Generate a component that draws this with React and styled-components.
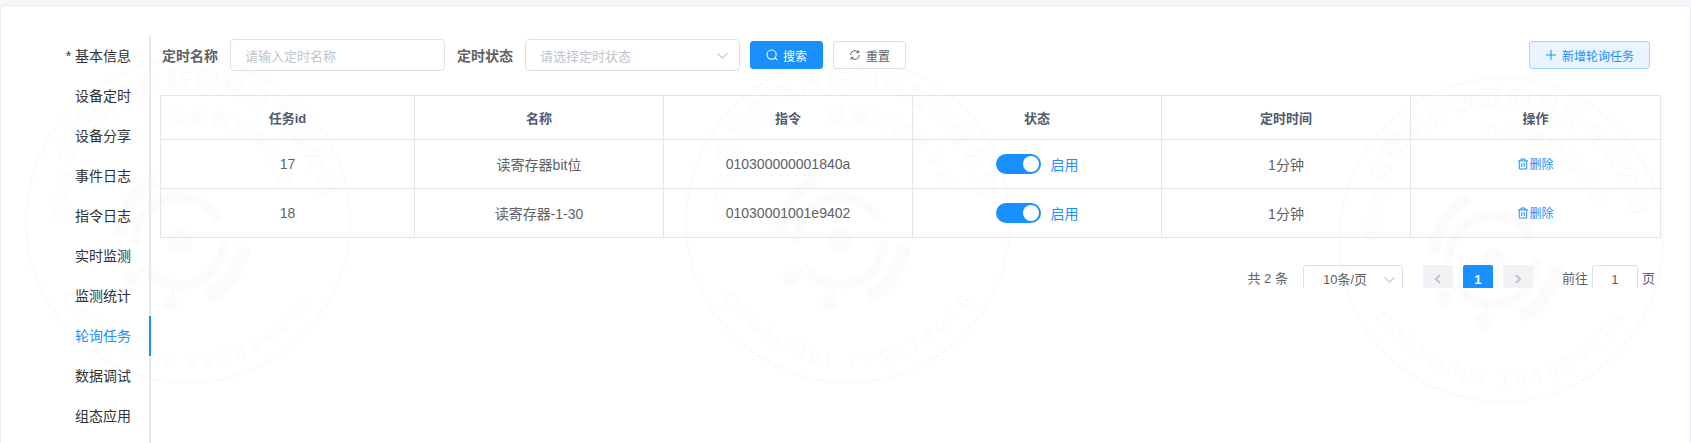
import React from "react";
import styled, { createGlobalStyle } from "styled-components";

const FONT = `"Liberation Sans", "Noto Sans CJK SC", sans-serif`;
const BLUE = "#1890ff";
const LINE = "#dfe6ec";

const Global = createGlobalStyle`
  html, body { margin: 0; height: 100%; overflow: hidden; background: #f4f6f7; }
  body { font-family: ${FONT}; color: #606266; }
  #root { height: 100%; }
  * { box-sizing: border-box; }
`;

const Page = styled.div`
  height: 100%;
  padding-top: 5px;
`;
const Card = styled.div`
  position: relative;
  height: calc(100% + 10px);
  display: flex;
  padding-top: 30px;
  background: #fff;
  border: 1px solid #e8ebf3;
  border-radius: 4px;
  overflow: hidden;
`;
const Mark = styled.svg`
  position: absolute;
  left: ${(p) => p.$x}px;
  top: ${(p) => p.$y}px;
  width: 340px;
  height: 340px;
  pointer-events: none;
`;
const Side = styled.nav`
  position: relative;
  flex: 0 0 150px;
  border-right: 2px solid #e4e8ef;
`;
const SideItem = styled.div`
  position: relative;
  height: 40px;
  line-height: 40px;
  padding-right: 18px;
  margin-right: -2px;
  text-align: right;
  font-size: 14px;
  color: ${(p) => (p.$active ? BLUE : "#303133")};
  border-right: 2px solid ${(p) => (p.$active ? BLUE : "transparent")};
`;
const Main = styled.main`
  position: relative;
  flex: 1;
  min-width: 0;
  padding: 3px 30px 0 9px;
`;
const Toolbar = styled.div`
  display: flex;
  align-items: center;
  height: 32px;
  padding: 0 10px 0 2px;
`;
const FieldLabel = styled.label`
  font-size: 14px;
  font-weight: 700;
  color: #606266;
  margin-right: 12px;
`;
const Field = styled.div`
  position: relative;
  display: flex;
  align-items: center;
  width: 215px;
  height: 32px;
  margin-right: ${(p) => p.$gap}px;
  padding: 0 14px;
  border: 1px solid #dcdfe6;
  border-radius: 4px;
  font-size: 13px;
  color: #c0c4cc;
`;
const FieldArrow = styled.span`
  position: absolute;
  right: 10px;
  top: 9px;
  display: flex;
  color: #c0c4cc;
`;
const Button = styled.button`
  display: inline-flex;
  align-items: center;
  justify-content: center;
  gap: 5px;
  height: 28px;
  padding: 0 15px;
  margin-right: ${(p) => p.$gap || 0}px;
  margin-left: ${(p) => (p.$push ? "auto" : 0)};
  border: 1px solid ${(p) => (p.$kind === "primary" ? BLUE : p.$kind === "light" ? "#a3d3ff" : "#dcdfe6")};
  border-radius: 3px;
  background: ${(p) => (p.$kind === "primary" ? BLUE : p.$kind === "light" ? "#e8f4ff" : "#fff")};
  color: ${(p) => (p.$kind === "primary" ? "#fff" : p.$kind === "light" ? BLUE : "#606266")};
  font: 12px ${FONT};
`;
const Table = styled.table`
  width: 1500px;
  margin-top: 24px;
  border-collapse: collapse;
  table-layout: fixed;
  font-size: 14px;
`;
const HeadCell = styled.th`
  width: ${(p) => p.$w}px;
  height: 44px;
  padding: 0;
  border: 1px solid ${LINE};
  font-size: 13px;
  font-weight: 700;
  color: #515a6e;
  text-align: center;
`;
const Cell = styled.td`
  height: 49px;
  padding: 0;
  border: 1px solid ${LINE};
  text-align: center;
  color: #606266;
`;
const StatusWrap = styled.div`
  display: flex;
  align-items: center;
  justify-content: center;
  gap: 10px;
  color: ${BLUE};
`;
const Switch = styled.span`
  display: flex;
  justify-content: flex-end;
  width: 45px;
  height: 20px;
  padding: 2px;
  border-radius: 10px;
  background: ${BLUE};
`;
const Knob = styled.span`
  width: 16px;
  height: 16px;
  border-radius: 50%;
  background: #fff;
`;
const DeleteLink = styled.a`
  display: inline-flex;
  align-items: center;
  font-size: 12px;
  color: ${BLUE};
`;
const Pager = styled.div`
  display: flex;
  align-items: flex-start;
  justify-content: flex-end;
  height: 23px;
  margin-top: 27px;
  padding-right: 5px;
  overflow: hidden;
  font-size: 13px;
  color: #606266;
`;
const PagerText = styled.span`
  height: 28px;
  line-height: 28px;
  margin-right: ${(p) => p.$gap || 0}px;
  white-space: pre;
`;
const PagerSelect = styled.div`
  position: relative;
  flex: 0 0 100px;
  height: 28px;
  line-height: 28px;
  padding-left: 19px;
  margin-right: 20px;
  border: 1px solid #dcdfe6;
  border-radius: 3px;
`;
const PagerArrow = styled.span`
  position: absolute;
  right: 6px;
  top: 7px;
  display: flex;
  color: #c0c4cc;
`;
const PageButton = styled.span`
  display: flex;
  align-items: center;
  justify-content: center;
  flex: 0 0 30px;
  height: 28px;
  margin-right: ${(p) => p.$gap}px;
  border-radius: 2px;
  background: ${(p) => (p.$active ? BLUE : "#f1f2f3")};
  color: ${(p) => (p.$active ? "#fff" : "#c0c4cc")};
  font-weight: 700;
`;
const PagerInput = styled.div`
  flex: 0 0 46px;
  height: 28px;
  line-height: 28px;
  margin: 0 4px;
  border: 1px solid #dcdfe6;
  border-radius: 3px;
  text-align: center;
`;

const Chevron = ({ size = 13, dir = "down", w = 1 }) => {
  const d = { down: "M1.5 4 L6 8.5 L10.5 4", left: "M8 2 L4 6 L8 10", right: "M4 2 L8 6 L4 10" }[dir];
  return (
    <svg width={size} height={size} viewBox="0 0 12 12" fill="none" stroke="currentColor" strokeWidth={w}>
      <path d={d} />
    </svg>
  );
};
const SearchIcon = () => (
  <svg width="12" height="12" viewBox="0 0 12 12" fill="none" stroke="currentColor" strokeWidth="1.1">
    <circle cx="5.6" cy="5.6" r="4.6" />
    <path d="M9 9 L11 11" />
  </svg>
);
const ResetIcon = () => (
  <svg width="12" height="12" viewBox="0 0 12 12" fill="none" stroke="currentColor" strokeWidth="1">
    <path d="M1.6 6 A4.4 4.4 0 0 1 9.4 3.2" />
    <path d="M10.4 6 A4.4 4.4 0 0 1 2.6 8.8" />
    <path d="M9.8 1.2 V3.6 H7.4" />
    <path d="M2.2 10.8 V8.4 H4.6" />
  </svg>
);
const PlusIcon = () => (
  <svg width="12" height="12" viewBox="0 0 12 12" fill="none" stroke="currentColor" strokeWidth="1">
    <path d="M6 1 V11 M1 6 H11" />
  </svg>
);
const TrashIcon = () => (
  <svg width="12" height="12" viewBox="0 0 12 12" fill="none" stroke="currentColor" strokeWidth="1">
    <path d="M1 2.9 H11 M4 2.9 V1 H8 V2.9 M2.3 2.9 V11 H9.7 V2.9 M4.8 4.8 V9 M7.2 4.8 V9" />
  </svg>
);

const STAMP = "#fbfbfc";
const Stamp = ({ id, x, y }) => (
  <Mark $x={x} $y={y} viewBox="-170 -170 340 340" aria-hidden="true">
    <defs>
      <path id={`${id}-top`} d="M-120 -56 A132 132 0 0 1 131 16" />
      <path id={`${id}-in`} d="M-20 -98 A100 100 0 0 1 98 18" />
      <path id={`${id}-bot`} d="M-134 0 A134 134 0 0 1 134 0" />
      <path id={`${id}-left`} d="M-126 -50 A137 137 0 0 0 -128 46" />
    </defs>
    <circle r="162" fill="none" stroke={STAMP} strokeWidth="2.5" />
    <g fill={STAMP} fontFamily={FONT}>
      <text fontSize="24" letterSpacing="2">
        <textPath href={`#${id}-top`}>合肥别存改联网科技有限公司</textPath>
      </text>
      <text fontSize="19" letterSpacing="2">
        <textPath href={`#${id}-in`}>设备物联网平台</textPath>
      </text>
      <text fontSize="17" letterSpacing="1">
        <textPath href={`#${id}-left`}>91386</textPath>
      </text>
      <g transform="scale(1,-1)">
        <text fontSize="20" letterSpacing="4.5" textAnchor="middle">
          <textPath href={`#${id}-bot`} startOffset="50%">Copyright 162914619</textPath>
        </text>
      </g>
      <circle cx="-8" cy="20" r="12" />
      <circle cx="-57" cy="58" r="8" />
      <circle cx="-18" cy="82" r="8" />
    </g>
    <g fill="none" stroke={STAMP}>
      <circle cx="-8" cy="20" r="44" strokeWidth="9" strokeDasharray="105 30 120 20" />
      <path d="M-68 14 A68 68 0 0 1 -32 -42" strokeWidth="12" strokeLinecap="butt" />
      <path d="M56 26 A66 66 0 0 1 20 76" strokeWidth="14" />
      <path d="M-57 58 L-40 44 M-18 82 L-12 62" strokeWidth="4" />
    </g>
  </Mark>
);

const tabs = ["基本信息", "设备定时", "设备分享", "事件日志", "指令日志", "实时监测", "监测统计", "轮询任务", "数据调试", "组态应用"];
const columns = [["任务id", 254], ["名称", 249], ["指令", 249], ["状态", 249], ["定时时间", 249], ["操作", 250]];
const rows = [
  { id: "17", name: "读寄存器bit位", cmd: "010300000001840a" },
  { id: "18", name: "读寄存器-1-30", cmd: "01030001001e9402" },
];
const stamps = [
  { id: "a", x: 17, y: 45 },
  { id: "b", x: 677, y: 45 },
  { id: "c", x: 1330, y: 64 },
];

export default function App() {
  return (
    <Page>
      <Global />
      <Card>
        {stamps.map((s) => <Stamp key={s.id} {...s} />)}
        <Side>
          {tabs.map((t, i) => (
            <SideItem key={t} $active={t === "轮询任务"}>{i === 0 ? `* ${t}` : t}</SideItem>
          ))}
        </Side>
        <Main>
          <Toolbar>
            <FieldLabel>定时名称</FieldLabel>
            <Field $gap={12}>请输入定时名称</Field>
            <FieldLabel>定时状态</FieldLabel>
            <Field $gap={10}>
              请选择定时状态
              <FieldArrow><Chevron /></FieldArrow>
            </Field>
            <Button $kind="primary" $gap={10}><SearchIcon />搜索</Button>
            <Button><ResetIcon />重置</Button>
            <Button $kind="light" $push><PlusIcon />新增轮询任务</Button>
          </Toolbar>
          <Table>
            <thead>
              <tr>{columns.map(([c, w]) => <HeadCell key={c} $w={w}>{c}</HeadCell>)}</tr>
            </thead>
            <tbody>
              {rows.map((r) => (
                <tr key={r.id}>
                  <Cell>{r.id}</Cell>
                  <Cell>{r.name}</Cell>
                  <Cell>{r.cmd}</Cell>
                  <Cell>
                    <StatusWrap>
                      <Switch><Knob /></Switch>
                      启用
                    </StatusWrap>
                  </Cell>
                  <Cell>1分钟</Cell>
                  <Cell><DeleteLink><TrashIcon />删除</DeleteLink></Cell>
                </tr>
              ))}
            </tbody>
          </Table>
          <Pager>
            <PagerText $gap={15}>共 2 条</PagerText>
            <PagerSelect>
              10条/页
              <PagerArrow><Chevron /></PagerArrow>
            </PagerSelect>
            <PageButton $gap={10}><Chevron size={12} dir="left" w={2} /></PageButton>
            <PageButton $gap={10} $active>1</PageButton>
            <PageButton $gap={29}><Chevron size={12} dir="right" w={2} /></PageButton>
            <PagerText>前往</PagerText>
            <PagerInput>1</PagerInput>
            <PagerText>页</PagerText>
          </Pager>
        </Main>
      </Card>
    </Page>
  );
}
